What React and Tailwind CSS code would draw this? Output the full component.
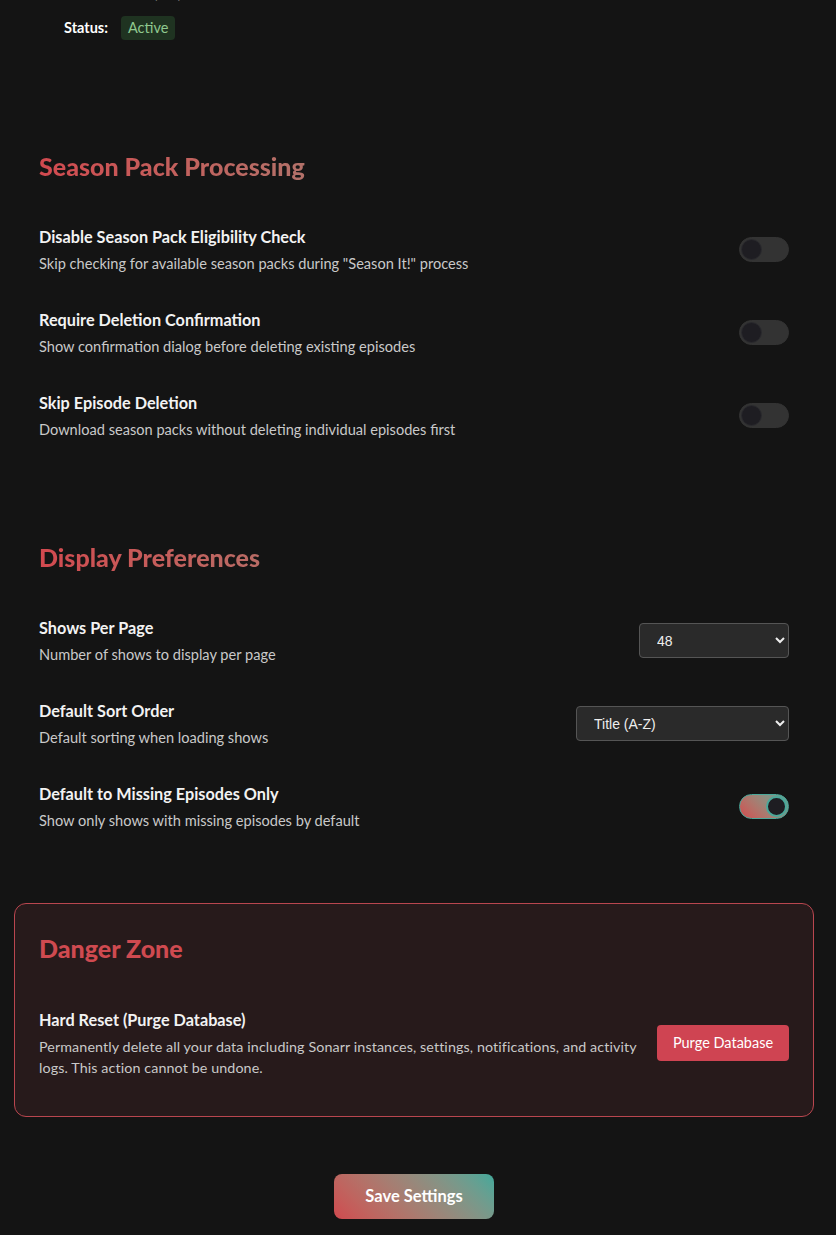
import { useState } from "react";

const font = { fontFamily: '"Lato", "Noto Sans", sans-serif' };

function Toggle({ on, onChange }) {
	return (
		<button
			type="button"
			onClick={onChange}
			className={`relative w-[50px] h-[25px] shrink-0 rounded-full ${
				on
					? "bg-linear-45 from-[#d0494f] to-[#45a89a] border border-[#4aa89a]"
					: "bg-[#333333] border border-[#333333]"
			}`}
		>
			<span
				className={`absolute top-[1px] w-[21px] h-[21px] rounded-full bg-[#1e1d22] ${
					on ? "right-[1px] border-2 border-[#4aa89a]" : "left-[1px] border border-[#2a2a2e]"
				}`}
			/>
		</button>
	);
}

function Row({ title, desc, descClass = "text-[14.6px]", children }) {
	return (
		<div className="flex items-center justify-between gap-5 py-[17px]">
			<div>
				<div className="text-[16.25px] leading-[24px] font-bold text-[#f2f2f2]">{title}</div>
				<div className={`mt-[4px] leading-[21px] text-[#c9c9c9] ${descClass}`}>{desc}</div>
			</div>
			{children}
		</div>
	);
}

function Heading({ children }) {
	return (
		<h2 className="text-[25px] leading-[36px] font-black mb-[24px] bg-gradient-to-r from-[#d2494f] to-[#52a096] bg-clip-text text-transparent">
			{children}
		</h2>
	);
}

export default function App() {
	const [settings, setSettings] = useState({
		disableCheck: false,
		requireConfirm: false,
		skipDeletion: false,
		missingOnly: true,
	});
	const [perPage, setPerPage] = useState("48");
	const [sortOrder, setSortOrder] = useState("title-asc");

	const flip = (key) => setSettings({ ...settings, [key]: !settings[key] });

	return (
		<div className="min-h-[1235px] bg-[#141414] overflow-hidden" style={font}>
			<div className="pl-[14px] pr-[22px] -mt-[21px]">
				{/* Account info (scrolled) */}
				<section className="px-[50px] pb-[48px]">
					<div className="flex items-center gap-[22px] h-[31px] text-[14px]">
						<span className="font-bold text-white">Created:</span>
						<span className="text-[#d0d0d0]">27/06/2025</span>
					</div>
					<div className="flex items-center gap-[13px] h-[31px] mt-[2px] text-[14.5px]">
						<span className="font-bold text-white">Status:</span>
						<span className="px-[7px] h-[24px] leading-[24px] rounded-[4px] bg-[#1f3321] text-[#8fc98f]">
							Active
						</span>
					</div>
				</section>

				{/* Season Pack Processing */}
				<section className="px-[25px] pt-[27px] pb-[25px] mt-[30px]">
					<Heading>Season Pack Processing</Heading>
					<Row
						title="Disable Season Pack Eligibility Check"
						desc={'Skip checking for available season packs during "Season It!" process'}
					>
						<Toggle on={settings.disableCheck} onChange={() => flip("disableCheck")} />
					</Row>
					<Row
						title="Require Deletion Confirmation"
						desc="Show confirmation dialog before deleting existing episodes"
					>
						<Toggle on={settings.requireConfirm} onChange={() => flip("requireConfirm")} />
					</Row>
					<Row
						title="Skip Episode Deletion"
						desc="Download season packs without deleting individual episodes first"
					>
						<Toggle on={settings.skipDeletion} onChange={() => flip("skipDeletion")} />
					</Row>
				</section>

				{/* Display Preferences */}
				<section className="px-[25px] pt-[27px] pb-[25px] mt-[30px]">
					<Heading>Display Preferences</Heading>
					<Row title="Shows Per Page" desc="Number of shows to display per page">
						<select
							value={perPage}
							onChange={(e) => setPerPage(e.target.value)}
							className="w-[150px] h-[35px] px-[13px] rounded-[4px] bg-[#2a2a2a] border border-[#555555] text-[14px] text-[#eeeeee]"
							style={{ fontFamily: '"Liberation Sans", Arial, sans-serif' }}
						>
							<option value="24">24</option>
							<option value="48">48</option>
							<option value="96">96</option>
						</select>
					</Row>
					<Row title="Default Sort Order" desc="Default sorting when loading shows">
						<select
							value={sortOrder}
							onChange={(e) => setSortOrder(e.target.value)}
							className="w-[213px] h-[35px] px-[13px] rounded-[4px] bg-[#2a2a2a] border border-[#555555] text-[14px] text-[#eeeeee]"
							style={{ fontFamily: '"Liberation Sans", Arial, sans-serif' }}
						>
							<option value="title-asc">Title (A-Z)</option>
							<option value="title-desc">Title (Z-A)</option>
							<option value="missing">Missing Episodes</option>
						</select>
					</Row>
					<Row
						title="Default to Missing Episodes Only"
						desc="Show only shows with missing episodes by default"
					>
						<Toggle on={settings.missingOnly} onChange={() => flip("missingOnly")} />
					</Row>
				</section>

				{/* Danger Zone */}
				<section className="mt-[30px] px-[24px] pt-[26px] pb-[21px] rounded-[12px] border border-[#b9464f] bg-[#271a1b]">
					<h2 className="text-[25px] leading-[36px] font-black mb-[25px] text-[#cf4a50]">Danger Zone</h2>
					<Row
						title="Hard Reset (Purge Database)"
						descClass="text-[14.3px] tracking-[0.1px]"
						desc="Permanently delete all your data including Sonarr instances, settings, notifications, and activity logs. This action cannot be undone."
					>
						<button
							type="button"
							className="shrink-0 w-[132px] h-[36px] rounded-[4px] bg-[#cf4452] text-white text-[14.5px]"
						>
							Purge Database
						</button>
					</Row>
				</section>

				<div className="flex justify-center mt-[57px] pb-[16px]">
					<button
						type="button"
						className="w-[160px] h-[45px] rounded-[8px] bg-linear-45 from-[#d0494f] to-[#3fa99b] text-white text-[16.5px] font-bold"
					>
						Save Settings
					</button>
				</div>
			</div>
		</div>
	);
}
